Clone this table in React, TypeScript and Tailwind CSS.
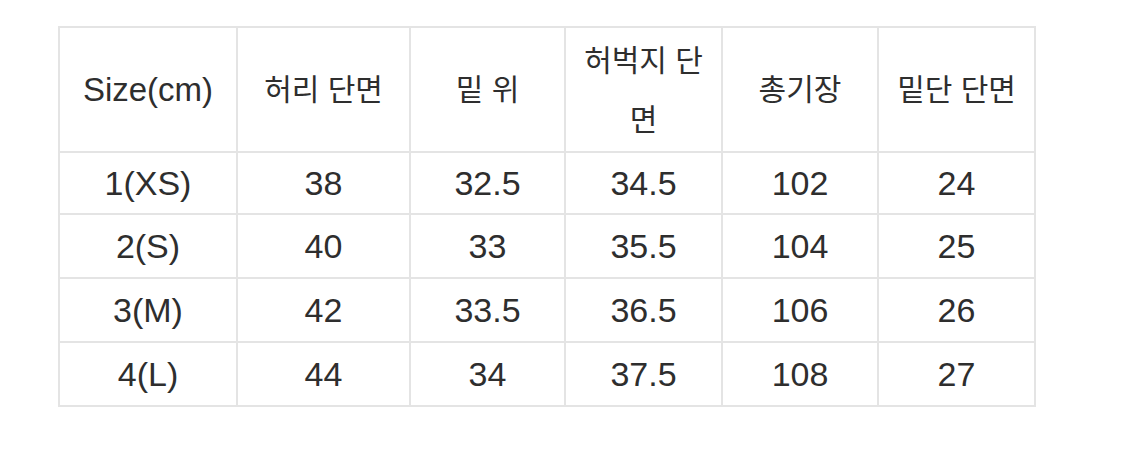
import React from "react";

const headers: React.ReactNode[] = [
  "Size(cm)",
  "허리 단면",
  "밑 위",
  <>
    허벅지 단<br />면
  </>,
  "총기장",
  "밑단 단면",
];

const rows = [
  ["1(XS)", "38", "32.5", "34.5", "102", "24"],
  ["2(S)", "40", "33", "35.5", "104", "25"],
  ["3(M)", "42", "33.5", "36.5", "106", "26"],
  ["4(L)", "44", "34", "37.5", "108", "27"],
];

const widths = ["w-[178px]", "w-[173px]", "w-[155px]", "w-[157px]", "w-[156px]", "w-[157px]"];

export default function App() {
  return (
    <div className="min-h-[452px] w-[1125px] bg-white pt-[26px] pl-[58px] font-['Liberation_Sans','Noto_Sans_CJK_KR',sans-serif] text-[#2e2e2e]">
      <table className="table-fixed border-collapse text-center">
        <colgroup>
          {widths.map((w, i) => (
            <col key={i} className={w} />
          ))}
        </colgroup>
        <thead>
          <tr className="h-[125px]">
            {headers.map((h, i) => (
              <th
                key={i}
                className={
                  i === 0
                    ? "border-2 border-[#e4e4e4] px-1 text-[33px] font-normal leading-[59px]"
                    : "border-2 border-[#e4e4e4] px-1 text-[30px] font-normal leading-[59px]"
                }
              >
                {h}
              </th>
            ))}
          </tr>
        </thead>
        <tbody>
          {rows.map((r, ri) => (
            <tr key={ri} className={ri === 0 ? "h-[62px]" : "h-[64px]"}>
              {r.map((c, ci) => (
                <td
                  key={ci}
                  className="border-2 border-[#e4e4e4] px-1 text-[34px] leading-[40px]"
                >
                  {c}
                </td>
              ))}
            </tr>
          ))}
        </tbody>
      </table>
    </div>
  );
}
